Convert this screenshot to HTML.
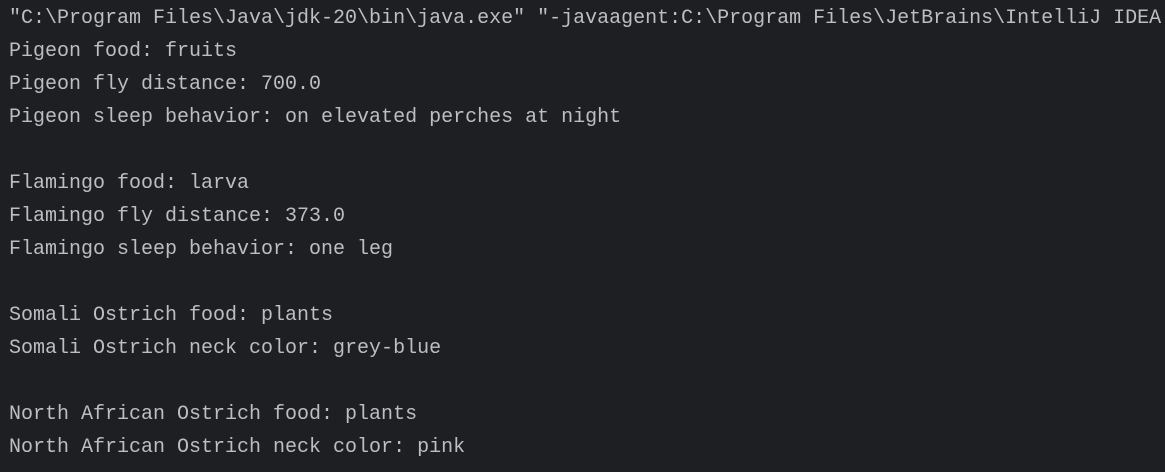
<!DOCTYPE html>
<html><head><meta charset="utf-8"><style>
html,body{margin:0;padding:0;background:#1e1f22;width:1165px;height:472px;overflow:hidden}
pre{margin:0;padding:2px 0 0 9px;font-family:"Liberation Mono",monospace;font-size:20px;line-height:33px;color:#bcbec4;white-space:pre}
</style></head><body><pre>"C:\Program Files\Java\jdk-20\bin\java.exe" "-javaagent:C:\Program Files\JetBrains\IntelliJ IDEA
Pigeon food: fruits
Pigeon fly distance: 700.0
Pigeon sleep behavior: on elevated perches at night

Flamingo food: larva
Flamingo fly distance: 373.0
Flamingo sleep behavior: one leg

Somali Ostrich food: plants
Somali Ostrich neck color: grey-blue

North African Ostrich food: plants
North African Ostrich neck color: pink</pre></body></html>
